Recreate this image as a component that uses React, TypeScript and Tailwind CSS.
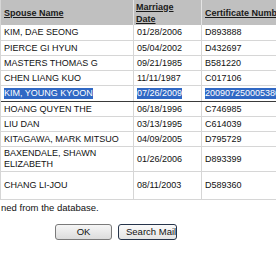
import React from "react";

type Row = {
  name: string;
  date: string;
  cert: string;
  h: string;
  selected?: boolean;
};

const rows: Row[] = [
  { name: "KIM, DAE SEONG", date: "01/28/2006", cert: "D893888", h: "h-[16px]" },
  { name: "PIERCE GI HYUN", date: "05/04/2002", cert: "D432697", h: "h-[15px]" },
  { name: "MASTERS THOMAS G", date: "09/21/1985", cert: "B581220", h: "h-[15px]" },
  { name: "CHEN LIANG KUO", date: "11/11/1987", cert: "C017106", h: "h-[15px]" },
  { name: "KIM, YOUNG KYOON", date: "07/26/2009", cert: "200907250005380", h: "h-[16px]", selected: true },
  { name: "HOANG QUYEN THE", date: "06/18/1996", cert: "C746985", h: "h-[15px]" },
  { name: "LIU DAN", date: "03/13/1995", cert: "C614039", h: "h-[15px]" },
  { name: "KITAGAWA, MARK MITSUO", date: "04/09/2005", cert: "D795729", h: "h-[15px]" },
  { name: "BAXENDALE, SHAWN ELIZABETH", date: "01/26/2006", cert: "D893399", h: "h-[25px]" },
  { name: "CHANG LI-JOU", date: "08/11/2003", cert: "D589360", h: "h-[28px]" },
];

function Cell({ text, selected, w, last }: { text: string; selected?: boolean; w: string; last?: boolean }) {
  return (
    <div
      className={`${w} shrink-0 flex items-center px-[3px] ${last ? "" : "border-r border-[#d6d6d6]"}`}
    >
      <span className={`leading-[11px] ${selected ? "bg-[#3068c4] text-white" : "text-[#111]"}`}>{text}</span>
    </div>
  );
}

export default function App() {
  return (
    <div
      className="w-[276px] h-[260px] overflow-hidden bg-white text-[9px]"
      style={{ fontFamily: '"Liberation Sans", Arial, sans-serif' }}
    >
      <div className="w-[340px] border-l border-[#d6d6d6]">
        {/* header */}
        <div className="flex h-[25px] bg-[#c0c0c0] font-bold text-[#1a1a1a] underline leading-[12px]">
          <div className="w-[133px] shrink-0 flex items-center px-[3px] border-r border-[#e4e4e4]">Spouse Name</div>
          <div className="w-[68px] shrink-0 flex items-center px-[2px] border-r border-[#e4e4e4]">
            Marriage
            <br />
            Date
          </div>
          <div className="flex-1 flex items-center px-[3px]">Certificate Number</div>
        </div>
        {rows.map((r) => (
          <div
            key={r.name}
            className={`flex ${r.h} border-b ${r.selected ? "border-[#3a3a3a]" : "border-[#d6d6d6]"}`}
          >
            <Cell text={r.name} selected={r.selected} w="w-[133px]" />
            <Cell text={r.date} selected={r.selected} w="w-[68px]" />
            <Cell text={r.cert} selected={r.selected} w="flex-1" last />
          </div>
        ))}
      </div>
      <div className="mt-[2px] pl-[1px] text-[9.5px] leading-[12px] text-[#111]">ned from the database.</div>
      <div className="flex mt-[10px] pl-[55px] gap-[6px]">
        <button className="w-[57px] h-[16px] rounded-[3px] border border-[#7a7a7a] bg-gradient-to-b from-[#f6f6f6] to-[#dcdcdc] text-[9.5px] leading-none text-[#111]">
          OK
        </button>
        <button className="w-[59px] h-[16px] rounded-[3px] border border-[#26344a] bg-gradient-to-b from-[#fafafa] to-[#e4e4e4] text-[9.5px] leading-none text-[#111] overflow-hidden whitespace-nowrap text-left pl-[7px]">
          Search Mail
        </button>
      </div>
    </div>
  );
}
